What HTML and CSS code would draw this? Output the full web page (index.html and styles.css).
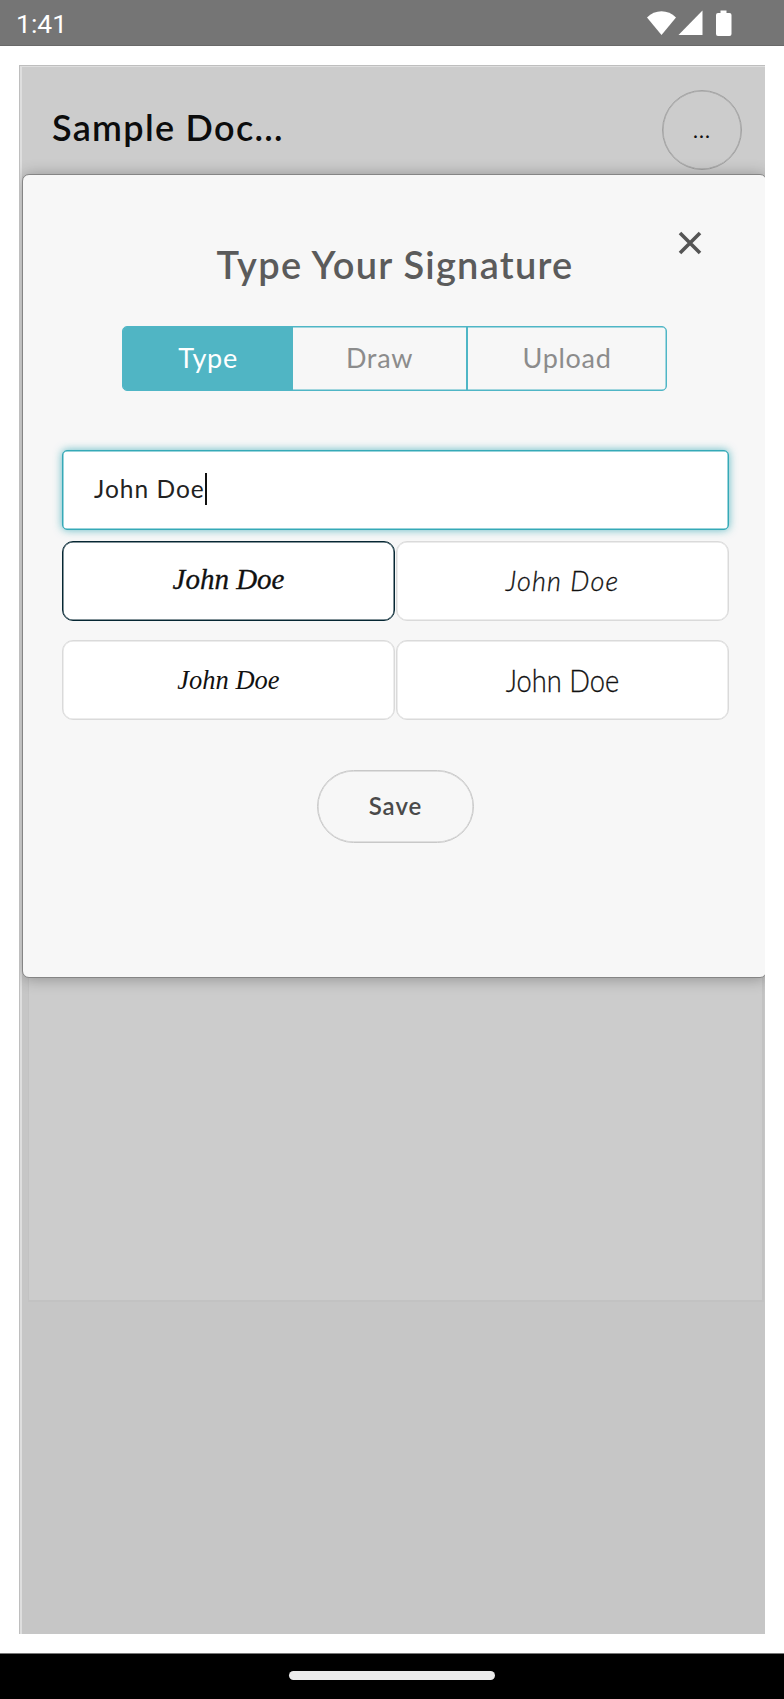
FILE: index.html
```html
<!DOCTYPE html>
<html lang="en">
<head>
<meta charset="utf-8">
<title>Type Your Signature</title>
<link rel="stylesheet" href="styles.css">
</head>
<body>
<header class="status">
  <span class="clock">1:41</span>
  <svg class="status-icons" width="86" height="27" viewBox="0 0 86 27">
    <path d="M0 7.5C8-1 21-1 29 7.5L14.5 25Z"/>
    <path d="M31.500 25L55.500 0.500V25Z"/>
    <path d="M73.500 0.500h6v2.500h3a2 2 0 0 1 2 2v19a2 2 0 0 1-2 2h-11.500a2 2 0 0 1-2-2v-19a2 2 0 0 1 2-2h2.500z"/>
  </svg>
</header>
<main class="app">
  <div class="topbar">
    <h1 class="doc-title"><span class="t-doc">Sample Doc...</span></h1>
    <button class="more"><span class="dots">...</span></button>
  </div>
  <div class="page"></div>
  <section class="modal">
    <div class="heading">
      <h2 class="title"><span class="t-title">Type Your Signature</span></h2>
      <svg class="close" width="24" height="24" viewBox="0 0 24 24"><path d="M2 2L22 22M22 2L2 22"/></svg>
    </div>
    <div class="tabs">
      <div class="tab tab-type active"><span>Type</span></div>
      <div class="tab tab-draw"><span>Draw</span></div>
      <div class="tab tab-upload"><span>Upload</span></div>
    </div>
    <div class="field"><span class="t-field">John Doe</span><i class="caret"></i></div>
    <div class="styles">
      <div class="card selected"><span class="sig sig-a">John Doe</span></div>
      <div class="card"><span class="sig sig-b">John Doe</span></div>
      <div class="card"><span class="sig sig-c">John Doe</span></div>
      <div class="card"><span class="sig sig-d">John Doe</span></div>
    </div>
    <button class="save"><span>Save</span></button>
  </section>
</main>
<footer class="navbar"><div class="handle"></div></footer>
</body>
</html>
```
FILE: styles.css
```css
* { box-sizing: border-box; }
body {
  margin: 0;
  width: 784px;
  height: 1699px;
  display: flex;
  flex-direction: column;
  background: #fff;
  font-family: Lato, "Open Sans", sans-serif;
  overflow: hidden;
}
.status {
  height: 46px;
  flex: none;
  background: #757575;
  border-bottom: 1px solid #696969;
  display: flex;
  align-items: center;
  justify-content: space-between;
  padding: 2px 51px 0 16px;
  color: #fff;
}
.clock { font: 26.500px/30px Roboto, sans-serif; letter-spacing: 0; padding-top: 0; }
.status-icons { fill: #fff; }
.app {
  position: relative;
  margin: 19px 19px 0;
  height: 1569px;
  flex: none;
  overflow: hidden;
  background: #c6c6c6;
  border-top: 1px solid #bebebe;
  border-left: 1px solid #bebebe;
  box-shadow: inset 2px 1px #dedede;
}
.topbar {
  height: 109px;
  margin: 1px 0 0 2px;
  background: #ccc;
  display: flex;
  justify-content: space-between;
  align-items: flex-start;
  padding: 23px 23px 0 30px;
}
.doc-title { margin: 15px 0 0; font-size: 36px; line-height: 44px; font-weight: 600; letter-spacing: 1.300px; color: #0c0c0c; white-space: nowrap; }
.more {
  width: 80px;
  height: 80px;
  border: 1px solid #a2a2a2;
  box-shadow: inset 0 0 0 .5px #a2a2a2;
  border-radius: 50%;
  background: none;
  padding: 0;
  font: 21px/24px Lato, sans-serif;
  letter-spacing: 1px;
  color: #111;
}
.page {
  height: 1126px;
  margin: 0 1px 0 8px;
  background: #ccc;
  border: solid #c2c2c2;
  border-width: 0 2px 2px 1px;
}
.modal {
  position: absolute;
  left: 2px;
  top: 108px;
  width: 745px;
  height: 804px;
  background: #f7f7f7;
  border: 1px solid #858585;
  border-radius: 7px;
  box-shadow: 0 1px 15px rgba(0,0,0,.3);
}
.heading { height: 151px; display: flex; justify-content: center; position: relative; }
.title { margin: 64px 0 0 1px; font-size: 38px; line-height: 50px; font-weight: 600; letter-spacing: 1.250px; color: #5b5b5b; white-space: nowrap; }
.close { position: absolute; left: 655px; top: 56px; fill: none; stroke: #555; stroke-width: 3.600; }
.tabs {
  width: 545px;
  height: 65px;
  margin: 0 0 0 99px;
  display: flex;
  border: 1px solid #4fb6c6;
  box-shadow: inset 0 0 0 .5px #4fb6c6;
  border-radius: 5px;
  overflow: hidden;
  font-size: 27px;
  line-height: 34px;
  letter-spacing: .7px;
  color: #8c8c8c;
}
.tab { display: flex; align-items: center; justify-content: center; padding-bottom: 1px; }
.tab-type { width: 170px; }
.tab-draw { width: 173px; }
.tab-upload { flex: 1; border-left: 2px solid #4fb6c6; }
.active { background: #50b5c4; color: #fff; }
.field {
  width: 667px;
  height: 80px;
  margin: 59px 0 0 39px;
  display: flex;
  align-items: center;
  padding: 0 0 3px 31px;
  background: #fff;
  border: 1px solid #35a9b7;
  border-radius: 5px;
  box-shadow: inset 0 0 0 .5px #35a9b7, 0 0 8px rgba(45,165,180,.75);
  font-size: 24.500px;
  letter-spacing: 1px;
  color: #222;
}
.caret { width: 2px; height: 32px; background: #111; }
.styles {
  width: 667px;
  margin: 11px 0 0 39px;
  display: grid;
  grid-template-columns: 333px 333px;
  gap: 19px 1px;
}
.card {
  height: 80px;
  display: flex;
  align-items: center;
  justify-content: center;
  background: #fff;
  border: 1px solid #dadada;
  box-shadow: inset 0 0 0 .5px #dadada;
  border-radius: 11px;
}
.selected { border-color: #062733; box-shadow: inset 0 0 0 .5px #062733; }
.sig { color: #111; white-space: nowrap; line-height: 40px; font-style: italic; }
.sig-a { font-family: "Liberation Serif", serif; font-size: 29px; -webkit-text-stroke: .3px #111; padding-bottom: 5px; }
.sig-b { font-family: Lato, sans-serif; font-weight: 300; font-size: 27px; letter-spacing: 1.200px; -webkit-text-stroke: .3px #111; }
.sig-c { font-family: "Liberation Serif", serif; font-size: 26.500px; }
.sig-d { font-family: Lato, sans-serif; font-weight: 300; font-style: normal; font-size: 31px; transform: scaleX(.88); -webkit-text-stroke: .3px #111; }
.save {
  display: flex;
  align-items: center;
  justify-content: center;
  width: 157px;
  height: 73px;
  margin: 50px 0 0 294px;
  border: 1px solid #c8c8c8;
  box-shadow: inset 0 0 0 .5px #c8c8c8;
  border-radius: 37px;
  background: none;
  padding: 0 0 2px;
  font: 600 24px/30px Lato, sans-serif;
  letter-spacing: 1px;
  color: #4a4a4a;
}
.navbar {
  height: 46px;
  margin-top: 19px;
  flex: none;
  background: #000;
  border-top: 1px solid #777;
  display: flex;
  justify-content: center;
  padding-top: 17px;
}
.handle { width: 206px; height: 9px; border-radius: 5px; background: #ebebeb; }
```
